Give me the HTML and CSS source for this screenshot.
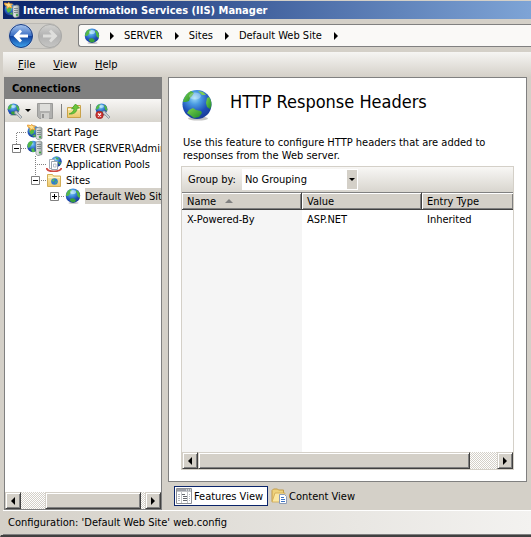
FILE: index.html
```html
<!DOCTYPE html>
<html lang="en">
<head>
<meta charset="utf-8">
<title>Internet Information Services (IIS) Manager</title>
<link rel="stylesheet" href="styles.css">
</head>
<body>
<svg class="defs" aria-hidden="true">
  <defs>
    <radialGradient id="sea" cx="42%" cy="28%" r="72%">
      <stop offset="0" stop-color="#9edcf8"/><stop offset=".3" stop-color="#4b9be2"/><stop offset=".7" stop-color="#1f50b8"/><stop offset="1" stop-color="#1a3c98"/>
    </radialGradient>
    <linearGradient id="land" x1="0" y1="0" x2="1" y2="1">
      <stop offset="0" stop-color="#7bd44c"/><stop offset="1" stop-color="#1f8a2c"/>
    </linearGradient>
    <linearGradient id="back" x1="0" y1="0" x2="0" y2="1">
      <stop offset="0" stop-color="#a9c6ee"/><stop offset=".48" stop-color="#3b6fc4"/><stop offset=".5" stop-color="#0f3f9e"/><stop offset="1" stop-color="#3fa5ee"/>
    </linearGradient>
    <linearGradient id="fwd" x1="0" y1="0" x2="0" y2="1">
      <stop offset="0" stop-color="#d2d2d0"/><stop offset=".5" stop-color="#b2b2b2"/><stop offset="1" stop-color="#c6c6c4"/>
    </linearGradient>
    <linearGradient id="box" x1="0" y1="0" x2="1" y2="0">
      <stop offset="0" stop-color="#f2f4f4"/><stop offset="1" stop-color="#9aa4a4"/>
    </linearGradient>
    <linearGradient id="manila" x1="0" y1="0" x2="0" y2="1">
      <stop offset="0" stop-color="#fdf0b4"/><stop offset="1" stop-color="#ecc76c"/>
    </linearGradient>
    <symbol id="globe" viewBox="0 0 32 32">
      <ellipse cx="17" cy="29.500" rx="10" ry="2" fill="#777" opacity=".45"/>
      <circle cx="16" cy="15.500" r="14.500" fill="url(#sea)"/>
      <path d="M2 13C3 8 6 4 10 2l3 2-2 3-2 2-1 3-3 1z" fill="url(#land)"/>
      <path d="M8 21l4-2 3 2 5 1 1 2-3 4-5 1-4-3-3-2z" fill="url(#land)"/>
      <path d="M26 9l2-1c3 4 3 9 1 12l-3-2-1-4z" fill="url(#land)"/>
      <path d="M17 2l5 1 3 3-4 0z" fill="#7ccb56"/>
      <ellipse cx="14" cy="7" rx="6" ry="3.500" fill="#fff" opacity=".3"/>
    </symbol>
    <symbol id="small-globe" viewBox="0 0 16 16">
      <ellipse cx="8.500" cy="15" rx="5" ry="1" fill="#777" opacity=".4"/>
      <circle cx="8" cy="7.700" r="7.200" fill="url(#sea)"/>
      <path d="M1 8c0-3 2-6 4-6.500l2 .5-1 2-1 2-2 2z" fill="#55b849"/>
      <path d="M11 2l3 2 1 3 0 3-2-1-1-2 0-2-1-1z" fill="#4fb544"/>
      <path d="M5 11l3-1 3 2-1 2-3 0.500-2-2z" fill="#39a03a"/>
      <ellipse cx="8" cy="4" rx="3" ry="2" fill="#d6f3ff" opacity=".6"/>
    </symbol>
    <symbol id="server" viewBox="0 0 16 16">
      <circle cx="6" cy="6.500" r="5.800" fill="url(#sea)"/>
      <path d="M.5 5C1 3 2 1.500 4 1l2 1-1 2-2 3-2 1zM4 9l3-1 1 4-3 0z" fill="#51b846"/>
      <path d="M9 2l4-1 2 1v12.500l-4 1.200-2-1.500z" fill="url(#box)" stroke="#7c8687" stroke-width=".7"/>
      <path d="M10 4.500h4M10 6.500h4M10 8.500h4" stroke="#6e7a7c" stroke-width=".8"/>
      <circle cx="13" cy="12.500" r="1" fill="#2ea52c"/>
    </symbol>
    <symbol id="start" viewBox="0 0 16 16">
      <circle cx="6.500" cy="7.500" r="6" fill="url(#sea)"/>
      <path d="M2 7l3-2 2 1 0 3-3 2zM5 12l3-2 1 3z" fill="#51b846"/>
      <path d="M9 4l4-1 2 1v10.500l-4 1.200-2-1.500z" fill="url(#box)" stroke="#7c8687" stroke-width=".7"/>
      <path d="M10 6.500h4M10 8.500h4M10 10.500h4" stroke="#6e7a7c" stroke-width=".8"/>
      <circle cx="13" cy="13" r="1" fill="#2ea52c"/>
      <path d="M.5 1l3 .5L5 .5l1 1.500 2.500 0-1.500 1.500 1 2.500-2.500-1L3 6.500 3 4 1 3z" fill="#ffe08a" stroke="#e8962a" stroke-width=".9"/>
    </symbol>
    <symbol id="connect" viewBox="0 0 16 16">
      <use href="#small-globe" width="13" height="13"/>
      <path d="M8 8l2 0 1 2 4 4-1.500 1.500-4-4-2-1z" fill="#c9ced2" stroke="#7e8890" stroke-width=".7"/>
    </symbol>
    <symbol id="disconnect" viewBox="0 0 16 16">
      <use href="#connect"/>
      <circle cx="4.500" cy="12" r="3.800" fill="#c93230" stroke="#8f1414" stroke-width=".5"/>
      <path d="M3 10.500l3 3M6 10.500l-3 3" stroke="#fff" stroke-width="1.200"/>
    </symbol>
    <symbol id="save" viewBox="0 0 16 16">
      <path d="M.5.5h15v15H2.500l-2-2z" fill="#b0b0ae" stroke="#9a9a98"/>
      <path d="M3 1h10v7H3z" fill="#dededb"/><path d="M4 10h8v6H4z" fill="#cfcfcc"/><path d="M5 11h2v4H5z" fill="#949492"/>
    </symbol>
    <symbol id="up" viewBox="0 0 16 16">
      <path d="M1.500 4.500h6l1-2h6v12h-13z" fill="url(#manila)" stroke="#c9a24a"/>
      <path d="M2 6.500h12" stroke="#fff6cc"/>
      <path d="M3 11c3-1 5-3 5-5.500L5.500 6l4-5 4 4-2.500.3C11 9 8 11.500 3 11z" fill="#6bc63b" stroke="#3c9a28" stroke-width=".7"/>
    </symbol>
    <symbol id="pools" viewBox="0 0 16 16">
      <circle cx="10.500" cy="5.500" r="5.200" fill="url(#sea)"/><path d="M9 1l4 1-2 2zM12 6l3 0-1 3z" fill="#4caf45"/>
      <path d="M.7 12c0 4.500 14.600 4.500 14.600 0" fill="none" stroke="#cf4a42" stroke-width="1.800"/>
      <path d="M3.500 3.500h5v9h-5z" fill="#fff" stroke="#a4adb8"/><path d="M5.500 5.500h6v8h-6z" fill="#fff" stroke="#98a3b0"/>
      <path d="M7.500 8h2.500v3H7.500z" fill="none" stroke="#a3b0bd" stroke-width=".8"/>
    </symbol>
    <symbol id="sites" viewBox="0 0 16 16">
      <path d="M1.500 2.500h5l1 1.500h7v10.500h-13z" fill="url(#manila)" stroke="#d2ad57"/>
      <path d="M2 5.500h12" stroke="#fff6cc"/>
      <circle cx="8.500" cy="9.500" r="3.300" fill="#2f7dcb"/><path d="M6 8l2-1 1 1-2 2zM9 10l2-1-1 3z" fill="#5dc04c"/>
    </symbol>
    <symbol id="features" viewBox="0 0 16 16">
      <path d="M.5.500h15v15H.5z" fill="#fff" stroke="#8d9096"/><path d="M1 1h14v2H1z" fill="#9b9ea6"/>
      <path d="M10 2h1M12 2h1M14 2h1" stroke="#fff"/><path d="M1 3.500h14M5.500 4v11M11.500 4v11" stroke="#c4c6ca"/>
      <path d="M2 6.500h2M2 8.500h2M2 10.500h2M2 12.500h2M13 6.500h1M13 8.500h1M13 10.500h1M13 12.500h1" stroke="#b5b9c0"/>
      <path d="M6 6.500h3M7 8.500h4M7 10.500h4M7 12.500h4" stroke="#66696f"/>
    </symbol>
    <symbol id="content" viewBox="0 0 16 16">
      <path d="M1 13.500V2.500l1.500-1.500h4l1 1h5v11.500z" fill="#eed27c" stroke="#c19a48"/>
      <path d="M1 14l3-9h10l-2.500 9z" fill="#fbe7a2" stroke="#cfa850" stroke-width=".8"/>
      <path d="M8.500 6.500h5l2 2v7h-7z" fill="#fff" stroke="#8c9cb8"/>
      <path d="M10 9.500h3M10 11.500h4M10 13.500h4" stroke="#3f74c4"/>
    </symbol>
    <pattern id="dots" width="2" height="2" patternUnits="userSpaceOnUse"><path d="M0 0h1v1H0zM1 1h1v1H1z" fill="#808080"/></pattern>
  </defs>
</svg>

<header class="title-bar">
  <svg class="icon"><use href="#start"/></svg>
  <h1>Internet Information Services (IIS) Manager</h1>
</header>

<nav class="nav-bar" aria-label="Location">
  <svg class="history" viewBox="0 0 54 28" role="img" aria-label="Back and forward">
    <rect x=".5" y="1.500" width="53" height="25" rx="12.500" fill="#cfcdc8" stroke="#bbb9b4"/>
    <circle cx="13" cy="14" r="12.500" fill="#d8dce4"/>
    <circle cx="13" cy="14" r="11.500" fill="url(#back)" stroke="#173a80"/>
    <circle cx="42" cy="14" r="11.500" fill="url(#fwd)" stroke="#a9a9a7"/>
    <path d="M5.500 14l6.500-6.500 2 2L11.500 12.500H20v3h-8.500l2.500 3-2 2z" fill="#fff"/>
    <path d="M49.500 14L43 7.500l-2 2 2.500 3H35v3h8.500l-2.500 3 2 2z" fill="#dededc"/>
  </svg>
  <div class="address">
    <svg class="icon"><use href="#small-globe"/></svg>
    <i class="chevron"></i><a href="#server-node">SERVER</a>
    <i class="chevron"></i><a href="#sites-node">Sites</a>
    <i class="chevron"></i><a href="#site-node">Default Web Site</a>
    <i class="chevron"></i>
  </div>
</nav>

<div class="menu-bar">
  <button type="button"><u>F</u>ile</button>
  <button type="button"><u>V</u>iew</button>
  <button type="button"><u>H</u>elp</button>
</div>

<div class="workspace">
  <aside class="connections">
    <h2>Connections</h2>
    <div class="toolbar">
      <button type="button" aria-label="Connect"><svg class="icon"><use href="#connect"/></svg><i class="drop"></i></button>
      <button type="button" aria-label="Save"><svg class="icon"><use href="#save"/></svg></button>
      <i class="separator"></i>
      <button type="button" aria-label="Up"><svg class="icon"><use href="#up"/></svg></button>
      <i class="separator"></i>
      <button type="button" aria-label="Disconnect"><svg class="icon"><use href="#disconnect"/></svg></button>
    </div>
    <ul class="tree">
      <li>
        <svg class="guide level-1"><path d="M11 8h11v1H11zM11 8h1v8h-1z" fill="url(#dots)"/></svg>
        <svg class="icon"><use href="#start"/></svg><span>Start Page</span>
      </li>
      <li id="server-node">
        <svg class="guide level-1"><path d="M16 8h6v1h-6zM11 0h1v4h-1z" fill="url(#dots)"/><path d="M7.500 4.500h8v8h-8z" fill="#fff" stroke="#808080"/><path d="M9 8.500h5" stroke="#000"/></svg>
        <svg class="icon"><use href="#server"/></svg><span>SERVER (SERVER\Admin</span>
      </li>
      <li>
        <svg class="guide level-2"><path d="M30 8h11v1H30zM30 0h1v16h-1z" fill="url(#dots)"/></svg>
        <svg class="icon"><use href="#pools"/></svg><span>Application Pools</span>
      </li>
      <li id="sites-node">
        <svg class="guide level-2"><path d="M35 8h6v1h-6zM30 0h1v4h-1z" fill="url(#dots)"/><path d="M26.500 4.500h8v8h-8z" fill="#fff" stroke="#808080"/><path d="M28 8.500h5" stroke="#000"/></svg>
        <svg class="icon"><use href="#sites"/></svg><span>Sites</span>
      </li>
      <li id="site-node">
        <svg class="guide level-3"><path d="M54 8h6v1h-6z" fill="url(#dots)"/><path d="M45.500 4.500h8v8h-8z" fill="#fff" stroke="#808080"/><path d="M47 8.500h5M49.500 6v5" stroke="#000"/></svg>
        <svg class="icon"><use href="#small-globe"/></svg><span class="selected">Default Web Sit</span>
      </li>
    </ul>
    <div class="scrollbar tree-scroll">
      <button type="button" class="arrow left" aria-label="Scroll left"></button>
      <div class="track"><div class="thumb"></div></div>
      <button type="button" class="arrow right" aria-label="Scroll right"></button>
    </div>
  </aside>

  <main class="main">
    <section class="page">
      <div class="page-head">
        <svg class="page-icon"><use href="#globe"/></svg>
        <h2>HTTP Response Headers</h2>
      </div>
      <p>Use this feature to configure HTTP headers that are added to<br>responses from the Web server.</p>
      <div class="list">
        <div class="group-bar">
          <label for="group">Group by:</label>
          <div class="combo">
            <select id="group"><option>No Grouping</option></select>
            <span class="combo-arrow"><i class="drop"></i></span>
          </div>
        </div>
        <div class="table-area">
          <table>
            <thead><tr><th class="col-name">Name<i class="sort"></i></th><th class="col-value">Value</th><th>Entry Type</th></tr></thead>
            <tbody><tr><td>X-Powered-By</td><td>ASP.NET</td><td>Inherited</td></tr></tbody>
          </table>
        </div>
        <div class="scrollbar list-scroll">
          <button type="button" class="arrow left" aria-label="Scroll left"></button>
          <div class="track"><div class="thumb"></div></div>
          <button type="button" class="arrow right" aria-label="Scroll right"></button>
        </div>
      </div>
    </section>
    <div class="views">
      <button type="button" class="current"><svg class="icon"><use href="#features"/></svg>Features View</button>
      <button type="button"><svg class="icon"><use href="#content"/></svg>Content View</button>
    </div>
  </main>
</div>

<footer class="status">Configuration: 'Default Web Site' web.config</footer>
</body>
</html>
```

FILE: styles.css
```css
* { box-sizing: border-box; }

body {
  margin: 0;
  min-height: 100vh;
  display: flex;
  flex-direction: column;
  overflow: hidden;
  padding: 1px 0 0 2px;
  border-left: 1px solid #d4d0c8;
  border-bottom: 2px solid #404040;
  background: #d4d0c8;
  color: #000;
  font: 11px/13px "DejaVu Sans Condensed", "DejaVu Sans", sans-serif;
}

h1, h2, p, ul { margin: 0; padding: 0; font-size: inherit; }
button { margin: 0; padding: 0; border: 0; background: none; color: inherit; font: inherit; display: flex; align-items: center; }
a { color: inherit; text-decoration: none; }
.defs { position: absolute; width: 0; height: 0; }
.icon { width: 16px; height: 16px; flex: none; display: block; }

.title-bar {
  height: 18px;
  display: flex;
  align-items: center;
  gap: 3px;
  padding-left: 1px;
  background: linear-gradient(90deg, #0a246a, #7ea4d6);
  color: #fff;
}
.title-bar h1 { font-weight: bold; white-space: nowrap; }

.nav-bar { height: 33px; display: flex; align-items: center; gap: 16px; padding-left: 5px; }
.history { width: 54px; height: 28px; flex: none; }
.address {
  flex: 1;
  height: 23px;
  display: flex;
  align-items: center;
  padding-left: 5px;
  border: 1px solid #808080;
  border-right: 0;
  border-radius: 3px 0 0 3px;
  background: #faf9f7;
  white-space: nowrap;
}
.chevron { border: 4px solid transparent; border-left-color: #000; border-right: 0; margin: 0 10px 0 12px; }
.icon + .chevron { margin-left: 10px; }

.menu-bar {
  height: 25px;
  display: flex;
  align-items: center;
  gap: 18px;
  padding-left: 15px;
  background: linear-gradient(#f6f5f3, #d4d0c8);
}

.workspace { flex: 1; display: flex; gap: 6px; padding: 0 4px 0 1px; }

.connections { width: 158px; flex: none; display: flex; flex-direction: column; border: 1px solid #808080; border-top: 0; background: #fff; }
.connections h2 { height: 22px; padding: 5px 7px; background: #808080; }
.toolbar {
  height: 23px;
  display: flex;
  align-items: center;
  gap: 6px;
  padding: 0 2px;
  background: linear-gradient(#f8f7f5, #d8d5ce);
}
.toolbar .separator { width: 1px; height: 14px; margin: 0 -2px 0 2px; background: #808080; }
.drop { border: 3px solid transparent; border-top-color: #000; border-bottom: 0; }
.toolbar .drop { margin-left: 2px; }

.tree { flex: 1; padding-top: 2px; list-style: none; overflow: hidden; }
.tree li { height: 16px; display: flex; align-items: center; gap: 4px; white-space: nowrap; }
.guide { height: 16px; flex: none; margin-right: -4px; }
.level-1 { width: 22px; }
.level-2 { width: 41px; }
.level-3 { width: 60px; }
.tree .selected { flex: 1; padding: 2px 0 1px; background: #d4d0c8; }

.scrollbar { height: 17px; flex: none; display: flex; }
.track { flex: 1; display: flex; background: repeating-conic-gradient(#fff 0 25%, #d4d0c8 0 50%) 0 0 / 2px 2px; }
.arrow, .thumb {
  border: 1px solid;
  border-color: #d4d0c8 #404040 #404040 #d4d0c8;
  background: #d4d0c8;
  box-shadow: inset 1px 1px #fff, inset -1px -1px #808080;
}
.arrow { width: 16px; justify-content: center; }
.arrow::before { content: ""; border: 4px solid transparent; }
.arrow.left::before { border-left: 0; border-right-color: #000; }
.arrow.right::before { border-right: 0; border-left-color: #000; }
.tree-scroll .thumb { width: 78%; margin-left: 19%; }
.list-scroll .thumb { width: 91%; }

.main { flex: 1; min-width: 0; display: flex; flex-direction: column; }
.page {
  flex: 1;
  display: flex;
  flex-direction: column;
  padding: 11px 12px;
  border: 1px solid #808080;
  background: #fff;
}
.page-head { display: flex; align-items: flex-start; gap: 17px; }
.page-icon { width: 32px; height: 32px; flex: none; }
.page-head h2 { font-size: 18px; line-height: 26px; font-weight: normal; white-space: nowrap; }
.page p { margin: 15px 0 4px 2px; white-space: nowrap; }

.list { flex: 1; display: flex; flex-direction: column; border: 1px solid #d4d0c8; }
.group-bar {
  height: 25px;
  display: flex;
  align-items: center;
  gap: 6px;
  padding-left: 6px;
  background: linear-gradient(#f8f7f5, #d8d5ce);
}
.combo { position: relative; width: 116px; height: 21px; background: #fff; }
.combo select {
  width: 100%;
  height: 21px;
  padding: 0 3px;
  border: 0;
  appearance: none;
  background: #fff;
  color: #000;
  font: inherit;
}
.combo-arrow {
  position: absolute;
  top: 1px;
  right: 1px;
  width: 10px;
  height: 19px;
  display: flex;
  align-items: center;
  justify-content: center;
  background: #d4d0c8;
  pointer-events: none;
}
.table-area { flex: 1; background: linear-gradient(#f5f5f5, #f5f5f5) 0 0 / 120px 100% no-repeat; }
table { width: 100%; border-spacing: 0; table-layout: fixed; }
th, td { padding: 0 5px; text-align: left; font-weight: normal; white-space: nowrap; }
th {
  height: 18px;
  background: #d4d0c8;
  border-top: 1px solid #808080;
  border-right: 1px solid #404040;
  border-bottom: 1px solid #404040;
  box-shadow: inset 1px 1px #fff, inset -1px -1px #808080;
}
th:last-child { border-right: 0; }
td { height: 18px; }
.col-name, .col-value { width: 120px; }
.sort { display: inline-block; margin: 0 0 2px 9px; border: 4px solid transparent; border-top: 0; border-bottom-color: #808080; }

.views { height: 28px; display: flex; align-items: center; gap: 2px; padding-left: 6px; }
.views button { height: 20px; gap: 2px; padding: 0 4px 0 1px; }
.views .current { border: 1px solid #0a246a; background: #fff; }

.status {
  height: 25px;
  padding: 5px;
  border-top: 1px solid #fff;
  border-bottom: 1px solid #808080;
  background: linear-gradient(90deg, #d4d0c8, #f3f2f0);
}
```
